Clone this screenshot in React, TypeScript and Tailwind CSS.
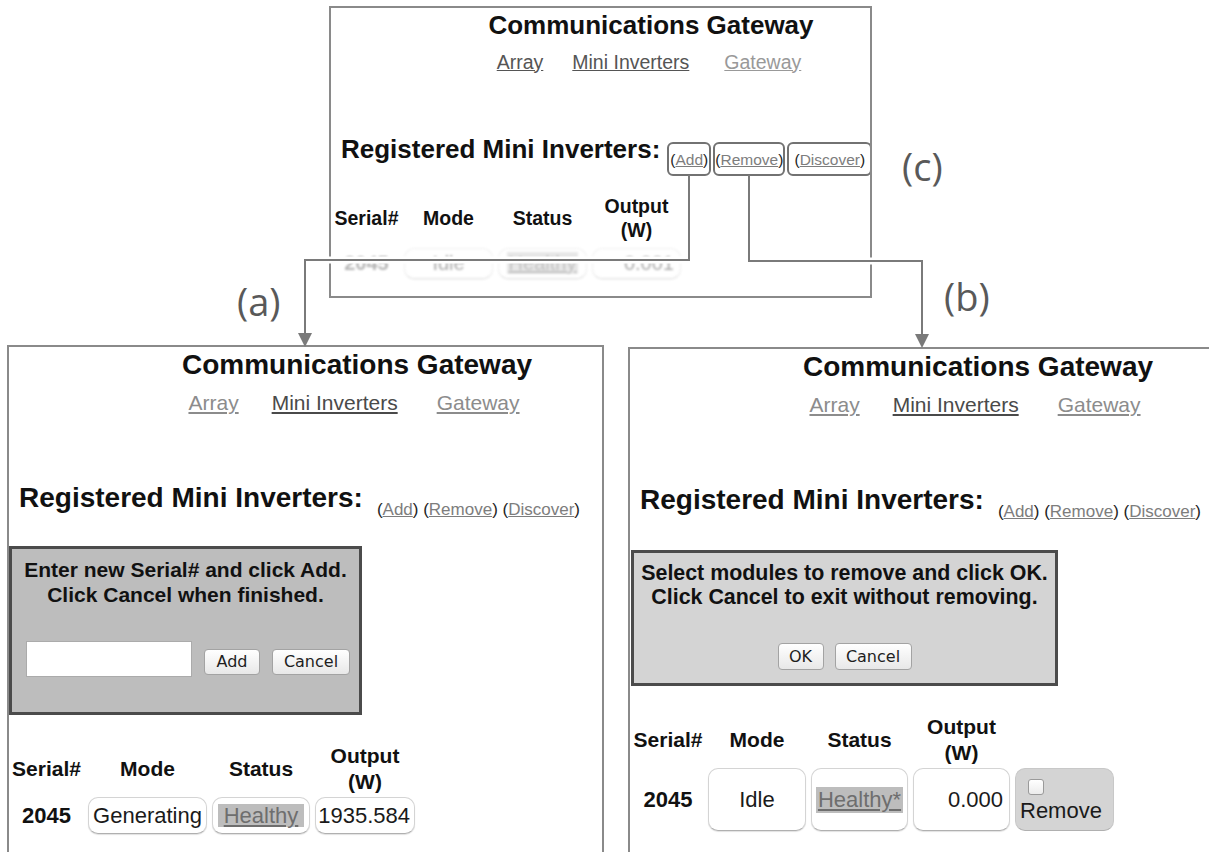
import React from "react";

const sans = "font-['Liberation_Sans',Arial,Helvetica,sans-serif]";
const cell =
  "rounded-[10px] border border-[#d4d4d4] border-b-[#b0b0b0] bg-white shadow-[0_1px_1px_rgba(0,0,0,0.12)]";

function Btn({ label, className }: { label: string; className: string }) {
  return (
    <div
      className={`flex items-center justify-center rounded-[4px] border border-[#a3a3a3] bg-linear-to-b from-white to-[#e8e8e8] font-['DejaVu_Sans',sans-serif] text-[16px] leading-none text-[#1e1e1e] ${className}`}
    >
      {label}
    </div>
  );
}

function Header() {
  return (
    <div className="w-[696px]">
      <div className="pt-[2px] text-center text-[28px] font-bold leading-[32px] text-[#111]">
        Communications Gateway
      </div>
      <div className="mt-[10px] flex justify-center pr-[6px] text-[21px] leading-[24px]">
        <span className="text-[#8c8c8c] underline">Array</span>
        <span className="ml-[33px] text-[#4a4a4a] underline">Mini Inverters</span>
        <span className="ml-[39px] text-[#8c8c8c] underline">Gateway</span>
      </div>
      <div className="mt-[67px] flex items-start pl-[10px]">
        <span className="whitespace-nowrap text-[28px] font-bold leading-[32px] text-[#111]">
          Registered Mini Inverters:
        </span>
        <span className="ml-[14px] mt-[18px] whitespace-nowrap text-[17px] leading-[20px] text-[#222]">
          (<span className="text-[#7d7d7d] underline">Add</span>) (
          <span className="text-[#7d7d7d] underline">Remove</span>) (
          <span className="text-[#7d7d7d] underline">Discover</span>)
        </span>
      </div>
    </div>
  );
}

function HeadCell({ children }: { children: React.ReactNode }) {
  return (
    <div className="flex h-[52px] items-center justify-center text-center text-[21px] font-bold leading-[26px] text-[#111]">
      {children}
    </div>
  );
}

function PanelA() {
  return (
    <div className={`absolute left-[7px] top-[345px] h-[520px] w-[597px] overflow-hidden border-2 border-b-0 border-[#8a8a8a] bg-white ${sans}`}>
      <Header />
      <div className="mt-[26px] h-[169px] w-[353px] border-[3px] border-[#4b4b4b] bg-[#bdbdbd]">
        <div className="pt-[8px] text-center text-[21px] font-bold leading-[25px] text-[#111]">
          <div>Enter new Serial# and click Add.</div>
          <div>Click Cancel when finished.</div>
        </div>
        <div className="mt-[34px] flex items-start pl-[14px]">
          <div className="h-[36px] w-[166px] border border-[#ababab] bg-white" />
          <Btn label="Add" className="ml-[12px] mt-[8px] h-[26px] w-[56px]" />
          <Btn label="Cancel" className="ml-[12px] mt-[8px] h-[26px] w-[78px]" />
        </div>
      </div>
      <div className="ml-[1px] mt-[28px] grid grid-cols-[73px_119px_98px_100px] gap-x-[5px] gap-y-[2px]">
        <HeadCell>Serial#</HeadCell>
        <HeadCell>Mode</HeadCell>
        <HeadCell>Status</HeadCell>
        <HeadCell>
          Output
          <br />
          (W)
        </HeadCell>
        <div className="flex h-[37px] items-center justify-center text-[22px] font-bold text-[#111]">2045</div>
        <div className={`${cell} flex h-[37px] items-center justify-center text-[22px] text-[#1a1a1a]`}>Generating</div>
        <div className={`${cell} flex h-[37px] items-center justify-center text-[22px]`}>
          <span className="bg-[#bdbdbd] px-[6px] leading-[23px] text-[#6e6e6e] underline">Healthy</span>
        </div>
        <div className={`${cell} flex h-[37px] items-center justify-end pr-[4px] text-[22px] text-[#1a1a1a]`}>1935.584</div>
      </div>
    </div>
  );
}

function PanelB() {
  return (
    <div className={`absolute left-[628px] top-[347px] h-[520px] w-[600px] overflow-hidden border-2 border-b-0 border-r-0 border-[#8a8a8a] bg-white ${sans}`}>
      <Header />
      <div className="ml-[1px] mt-[28px] h-[136px] w-[427px] border-[3px] border-[#4b4b4b] bg-[#d4d4d4]">
        <div className="pt-[8px] text-center text-[21.4px] font-bold leading-[24px] text-[#111]">
          <div>Select modules to remove and click OK.</div>
          <div>Click Cancel to exit without removing.</div>
        </div>
        <div className="mt-[34px] flex justify-center gap-[11px]">
          <Btn label="OK" className="h-[27px] w-[46px]" />
          <Btn label="Cancel" className="h-[27px] w-[77px]" />
        </div>
      </div>
      <div className="ml-[3px] mt-[28px] grid grid-cols-[70px_98px_97px_97px_99px] gap-x-[5px] gap-y-[2px]">
        <HeadCell>Serial#</HeadCell>
        <HeadCell>Mode</HeadCell>
        <HeadCell>Status</HeadCell>
        <HeadCell>
          Output
          <br />
          (W)
        </HeadCell>
        <div />
        <div className="flex h-[63px] items-center justify-center text-[22px] font-bold text-[#111]">2045</div>
        <div className={`${cell} flex h-[63px] items-center justify-center text-[22px] text-[#1a1a1a]`}>Idle</div>
        <div className={`${cell} flex h-[63px] items-center justify-center text-[22px]`}>
          <span className="bg-[#bdbdbd] px-[2px] leading-[26px] text-[#6e6e6e] underline">Healthy*</span>
        </div>
        <div className={`${cell} flex h-[63px] items-center justify-end pr-[6px] text-[22px] text-[#1a1a1a]`}>0.000</div>
        <div className="flex h-[63px] flex-col items-start rounded-[10px] border border-[#c8c8c8] border-b-[#b0b0b0] bg-[#d4d4d4] pl-[4px] pt-[10px]">
          <div className="ml-[8px] h-[16px] w-[16px] rounded-[3px] border border-[#9a9a9a] bg-linear-to-b from-white to-[#ececec]" />
          <div className="mt-[4px] text-[22px] leading-[24px] text-[#1a1a1a]">Remove</div>
        </div>
      </div>
    </div>
  );
}

function LinkBox({ label, className }: { label: string; className: string }) {
  return (
    <div className={`flex h-[34px] justify-center rounded-[6px] border-2 border-[#727272] pt-[6px] text-[15.5px] leading-[20px] text-[#222] ${className}`}>
      <span>
        (<span className="text-[#7d7d7d] underline">{label}</span>)
      </span>
    </div>
  );
}

function PanelC() {
  const faded = `${cell} opacity-[0.35] blur-[0.8px]`;
  return (
    <div className={`absolute left-[329px] top-[6px] h-[292px] w-[543px] overflow-hidden border-2 border-[#8a8a8a] bg-white ${sans}`}>
      <div className="w-[640px]">
        <div className="pt-[3px] text-center text-[26px] font-bold leading-[29.5px] text-[#111]">
          Communications Gateway
        </div>
        <div className="mt-[10px] flex justify-center pr-[4px] text-[19.5px] leading-[22px]">
          <span className="text-[#555] underline">Array</span>
          <span className="ml-[29px] text-[#555] underline">Mini Inverters</span>
          <span className="ml-[35px] text-[#999] underline">Gateway</span>
        </div>
        <div className="mt-[62px] flex items-start pl-[10px]">
          <span className="whitespace-nowrap text-[26px] font-bold leading-[29.5px] text-[#111]">
            Registered Mini Inverters:
          </span>
          <div className="ml-[7px] mt-[7px] flex gap-[2px]">
            <LinkBox label="Add" className="w-[44px]" />
            <LinkBox label="Remove" className="w-[72px]" />
            <LinkBox label="Discover" className="w-[85px]" />
          </div>
        </div>
      </div>
      <div className="ml-[3px] mt-[18px] grid grid-cols-[65px_89px_89px_89px] gap-x-[5px] gap-y-[6px]">
        {["Serial#", "Mode", "Status"].map((h) => (
          <div key={h} className="flex h-[48px] items-center justify-center text-[19.5px] font-bold leading-[24px] text-[#111]">
            {h}
          </div>
        ))}
        <div className="flex h-[48px] items-center justify-center text-center text-[19.5px] font-bold leading-[24px] text-[#111]">
          Output
          <br />
          (W)
        </div>
        <div className="flex h-[31px] items-center justify-center text-[20px] font-bold text-[#111] opacity-[0.3] blur-[0.8px]">2045</div>
        <div className={`${faded} flex h-[31px] items-center justify-center text-[20px] text-[#111]`}>Idle</div>
        <div className={`${faded} flex h-[31px] items-center justify-center text-[20px]`}>
          <span className="bg-[#bdbdbd] px-[2px] leading-[22px] text-[#555] underline">Healthy</span>
        </div>
        <div className={`${faded} flex h-[31px] items-center justify-end pr-[6px] text-[20px] text-[#111]`}>0.001</div>
      </div>
    </div>
  );
}

function Connectors() {
  return (
    <svg className="pointer-events-none absolute left-0 top-0" width="1209" height="852" viewBox="0 0 1209 852">
      <g fill="none" stroke="#ffffff" strokeWidth="7">
        <path d="M689 176 V260 H305 V334" />
        <path d="M749 176 V261 H922 V334" />
      </g>
      <g fill="none" stroke="#7a7a7a" strokeWidth="2">
        <path d="M689 175 V260 H305 V334" />
        <path d="M749 175 V261 H922 V335" />
      </g>
      <polygon points="298,333 312,333 305,347" fill="#7a7a7a" />
      <polygon points="915,334 929,334 922,348" fill="#7a7a7a" />
    </svg>
  );
}

export default function App() {
  const label = "absolute font-['Open_Sans',sans-serif] text-[38px] leading-[38px] text-[#595959]";
  return (
    <div className="relative h-[852px] w-[1209px] overflow-hidden bg-white">
      <PanelC />
      <PanelA />
      <PanelB />
      <Connectors />
      <div className={`${label} left-[237px] top-[282px]`}>(a)</div>
      <div className={`${label} left-[944px] top-[277px]`}>(b)</div>
      <div className={`${label} left-[902px] top-[147px]`}>(c)</div>
    </div>
  );
}
